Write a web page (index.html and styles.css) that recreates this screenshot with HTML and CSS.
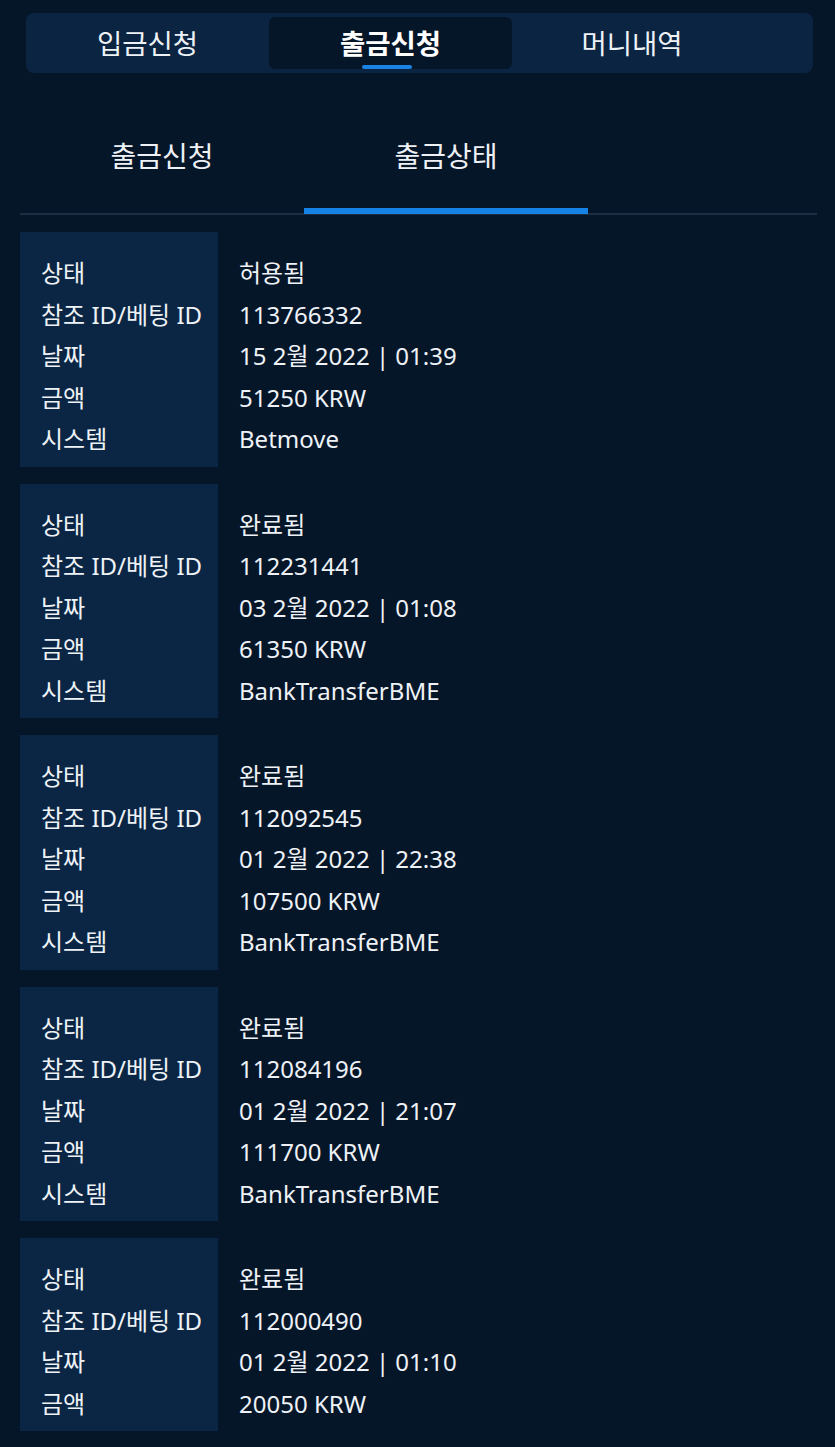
FILE: index.html
```html
<!DOCTYPE html>
<html lang="ko">
<head>
    <meta charset="UTF-8">
    <title>출금상태</title>
    <link rel="stylesheet" href="styles.css">
</head>
<body>
    <!-- Main tabs -->
    <nav class="main-tabs">
        <a class="main-tab" href="#">입금신청</a>
        <a class="main-tab active" href="#">출금신청</a>
        <a class="main-tab" href="#">머니내역</a>
    </nav>

    <!-- Sub tabs -->
    <div class="sub-tabs">
        <a class="sub-tab" href="#">출금신청</a>
        <a class="sub-tab active" href="#">출금상태</a>
    </div>

    <!-- Withdrawal list -->
    <div class="list">
        <div class="card">
            <div class="labels">
                <div>상태</div>
                <div>참조 ID/베팅 ID</div>
                <div>날짜</div>
                <div>금액</div>
                <div>시스템</div>
            </div>
            <div class="values">
                <div>허용됨</div>
                <div>113766332</div>
                <div>15 2월 2022 | 01:39</div>
                <div>51250 KRW</div>
                <div>Betmove</div>
            </div>
        </div>

        <div class="card">
            <div class="labels">
                <div>상태</div>
                <div>참조 ID/베팅 ID</div>
                <div>날짜</div>
                <div>금액</div>
                <div>시스템</div>
            </div>
            <div class="values">
                <div>완료됨</div>
                <div>112231441</div>
                <div>03 2월 2022 | 01:08</div>
                <div>61350 KRW</div>
                <div>BankTransferBME</div>
            </div>
        </div>

        <div class="card">
            <div class="labels">
                <div>상태</div>
                <div>참조 ID/베팅 ID</div>
                <div>날짜</div>
                <div>금액</div>
                <div>시스템</div>
            </div>
            <div class="values">
                <div>완료됨</div>
                <div>112092545</div>
                <div>01 2월 2022 | 22:38</div>
                <div>107500 KRW</div>
                <div>BankTransferBME</div>
            </div>
        </div>

        <div class="card">
            <div class="labels">
                <div>상태</div>
                <div>참조 ID/베팅 ID</div>
                <div>날짜</div>
                <div>금액</div>
                <div>시스템</div>
            </div>
            <div class="values">
                <div>완료됨</div>
                <div>112084196</div>
                <div>01 2월 2022 | 21:07</div>
                <div>111700 KRW</div>
                <div>BankTransferBME</div>
            </div>
        </div>

        <div class="card">
            <div class="labels">
                <div>상태</div>
                <div>참조 ID/베팅 ID</div>
                <div>날짜</div>
                <div>금액</div>
            </div>
            <div class="values">
                <div>완료됨</div>
                <div>112000490</div>
                <div>01 2월 2022 | 01:10</div>
                <div>20050 KRW</div>
            </div>
        </div>
    </div>
</body>
</html>
```

FILE: styles.css
```css
/* Page */
html {
    font-family: "Noto Sans", "Noto Sans CJK KR", sans-serif;
}

body {
    margin: 0;
    padding: 0;
    background-color: #061629;
    color: #eef2f6;
}

a {
    color: inherit;
    text-decoration: none;
}

/* Main tabs */
.main-tabs {
    display: grid;
    grid-template-columns: 243px 243px 240px;
    margin: 13px 22px 0 26px;
    padding: 4px 0;
    height: 52px;
    background-color: #0a2441;
    border-radius: 8px;
}

.main-tab {
    position: relative;
    display: flex;
    align-items: center;
    justify-content: center;
    font-size: 27.5px;
    border-radius: 6px;
    padding-bottom: 2px;
}

.main-tab.active {
    background-color: #061629;
    font-weight: bold;
    color: #fff;
}

.main-tab.active::after {
    content: "";
    position: absolute;
    left: 93px;
    bottom: 0;
    width: 50px;
    height: 4px;
    border-radius: 2px;
    background-color: #1a82e2;
}

/* Sub tabs */
.sub-tabs {
    display: flex;
    margin: 25px 18px 0 20px;
    border-bottom: 2px solid #1b2e43;
}

.sub-tab {
    display: flex;
    align-items: center;
    justify-content: center;
    box-sizing: border-box;
    width: 284px;
    height: 116px;
    padding-top: 4px;
    border-bottom: 6px solid transparent;
    font-size: 28px;
    margin-bottom: -1px;
}

.sub-tab.active {
    border-bottom-color: #1682e6;
}

/* Cards */
.list {
    padding-top: 17px;
}

.card {
    display: grid;
    grid-template-columns: 198px 1fr;
    margin: 0 18px 17px 20px;
    font-size: 24px;
    line-height: 41.5px;
}

.labels {
    background-color: #0a2644;
    padding: 20px 0 7px 21px;
}

.values {
    padding: 20px 0 7px 21px;
}
```
